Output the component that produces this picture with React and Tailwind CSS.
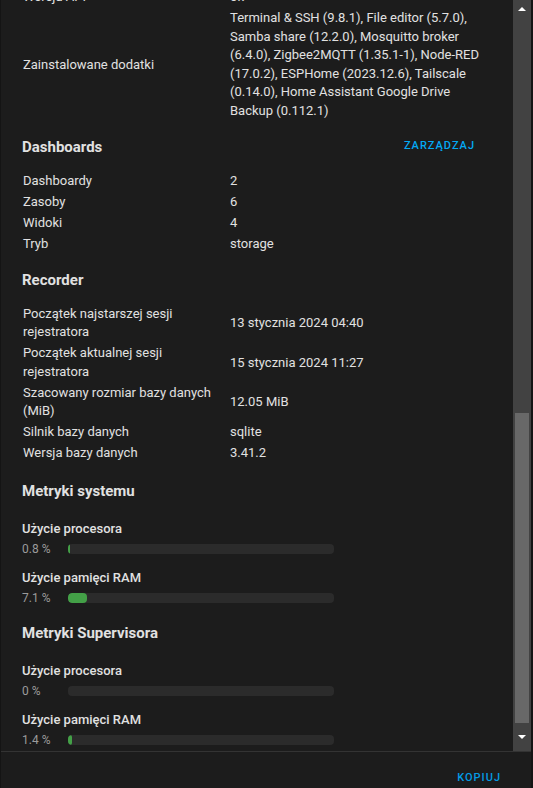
import React from 'react';

const addons =
  'Terminal & SSH (9.8.1), File editor (5.7.0), Samba share (12.2.0), Mosquitto broker (6.4.0), Zigbee2MQTT (1.35.1-1), Node-RED (17.0.2), ESPHome (2023.12.6), Tailscale (0.14.0), Home Assistant Google Drive Backup (0.112.1)';

function Row({ label, value }) {
  return (
    <div className="grid grid-cols-[207px_1fr] items-center py-[1.25px] pl-[1px] leading-[18.5px]">
      <div>{label}</div>
      <div>{value}</div>
    </div>
  );
}

function Heading({ children, action }) {
  return (
    <div className="flex items-center justify-between h-5">
      <h3 className="text-[15px] font-bold leading-5">{children}</h3>
      {action && (
        <span className="mr-[17px] text-[11px] font-medium tracking-[1px] text-[#03a9f4]">{action}</span>
      )}
    </div>
  );
}

function Metric({ label, value }) {
  return (
    <div>
      <div className="text-[13px] font-medium leading-[18px]">{label}</div>
      <div className="mt-[2px] flex items-center h-[18px]">
        <span className="w-[46px] text-[12px] text-[#9b9b9b]">{value} %</span>
        <div className="w-[266px] h-[10px] rounded bg-[#2b2b2b] overflow-hidden">
          <div className="h-full rounded bg-[#43a047]" style={{ width: `${Math.max(value, 0.9)}%`, display: value > 0 ? 'block' : 'none' }} />
        </div>
      </div>
    </div>
  );
}

export default function App() {
  return (
    <div
      className="w-[533px] h-[788px] bg-[#1c1c1c] text-[#e1e1e1] flex flex-col overflow-hidden border-l border-r-2 border-[#141414]"
      style={{ fontFamily: 'Roboto, "Noto Sans", sans-serif' }}
    >
      <div className="flex h-[751px]">
        <div className="flex-1 overflow-hidden">
          <div className="-mt-[13px] px-[21px] text-[13px]">
            {/* System */}
            <Row label="Wersja API" value="ok" />
            <Row label="Zainstalowane dodatki" value={addons} />

            {/* Dashboards */}
            <div className="mt-[15px]">
              <Heading action="ZARZĄDZAJ">Dashboards</Heading>
              <div className="mt-[14px]">
                <Row label="Dashboardy" value="2" />
                <Row label="Zasoby" value="6" />
                <Row label="Widoki" value="4" />
                <Row label="Tryb" value="storage" />
              </div>
            </div>

            {/* Recorder */}
            <div className="mt-[15px]">
              <Heading>Recorder</Heading>
              <div className="mt-[14px]">
                <Row label="Początek najstarszej sesji rejestratora" value="13 stycznia 2024 04:40" />
                <Row label="Początek aktualnej sesji rejestratora" value="15 stycznia 2024 11:27" />
                <Row label="Szacowany rozmiar bazy danych (MiB)" value="12.05 MiB" />
                <Row label="Silnik bazy danych" value="sqlite" />
                <Row label="Wersja bazy danych" value="3.41.2" />
              </div>
            </div>

            {/* Metrics */}
            <div className="mt-[17px]">
              <Heading>Metryki systemu</Heading>
              <div className="mt-[19px] flex flex-col gap-[11px]">
                <Metric label="Użycie procesora" value={0.8} />
                <Metric label="Użycie pamięci RAM" value={7.1} />
              </div>
            </div>

            <div className="mt-[16px]">
              <Heading>Metryki Supervisora</Heading>
              <div className="mt-[19px] flex flex-col gap-[11px]">
                <Metric label="Użycie procesora" value={0} />
                <Metric label="Użycie pamięci RAM" value={1.4} />
              </div>
            </div>
          </div>
        </div>

        {/* scrollbar */}
        <div className="w-[18px] bg-[#424242] flex flex-col items-center">
          <div className="h-[17px] flex items-center justify-center">
            <svg width="8" height="4" viewBox="0 0 8 4"><path d="M4 0L8 4H0z" fill="#fff" /></svg>
          </div>
          <div className="h-[396px]" />
          <div className="w-[14px] h-[310px] bg-[#686868]" />
          <div className="flex-1 flex items-center justify-center">
            <svg width="8" height="4" viewBox="0 0 8 4"><path d="M0 0H8L4 4z" fill="#fff" /></svg>
          </div>
        </div>
      </div>

      {/* footer */}
      <div className="flex-1 border-t border-[#333333] flex justify-end items-start pt-[19px] pr-[30px]">
        <span className="text-[11px] font-medium tracking-[1px] leading-[14px] text-[#039be5]">KOPIUJ</span>
      </div>
    </div>
  );
}
